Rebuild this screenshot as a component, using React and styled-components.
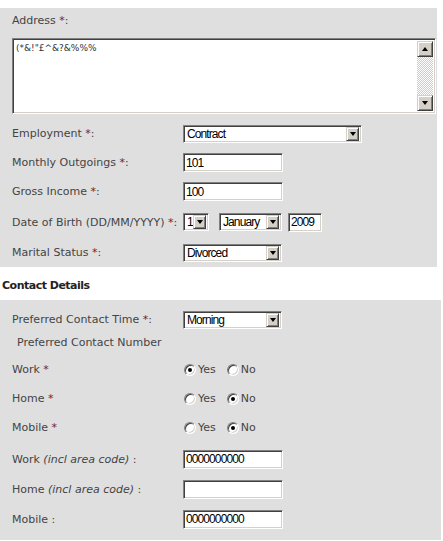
import React from 'react'
import styled, { createGlobalStyle, css } from 'styled-components'

const GlobalStyle = createGlobalStyle`
  html, body {
    margin: 0;
    padding: 0;
    background: #fff;
  }
  body {
    font-family: "DejaVu Sans", Verdana, sans-serif;
    font-size: 11px;
    color: #444;
  }
`

// classic sunken 3D edge used by inputs, selects and the textarea
const sunken = css`
  border: 1px solid;
  border-color: #808080 #fff #fff #808080;
  box-shadow: inset 1px 1px 0 #404040, inset -1px -1px 0 #d4d0c8;
`

const raised = css`
  border: 1px solid;
  border-color: #d4d0c8 #404040 #404040 #d4d0c8;
  box-shadow: inset 1px 1px 0 #fff, inset -1px -1px 0 #808080;
`

// narrow system-looking face for values inside the controls
const controlFont = css`
  font-family: "Liberation Sans", Arial, sans-serif;
  font-size: 12px;
  letter-spacing: -0.9px;
  color: #000;
`

const Page = styled.div`
  width: 443px;
  padding-top: 8px;
`

const Panel = styled.div`
  background: #dfdfdf;
  width: ${p => p.$width}px;
  padding: ${p => p.$pad};
  box-sizing: border-box;
`

const FieldTitle = styled.div`
  line-height: 13px;
  margin-bottom: 11px;
`

const Req = styled.span`
  color: #7a1c1c;
`

const TextBox = styled.div`
  width: 424px;
  height: 76px;
  box-sizing: border-box;
  display: flex;
  background: #fff;
  padding: 2px;
  ${sunken};
`

const Area = styled.textarea`
  flex: 1;
  border: none;
  outline: none;
  resize: none;
  margin: 0;
  padding: 2px 1px;
  background: #fff;
  font-family: "DejaVu Sans", Verdana, sans-serif;
  font-size: 9px;
  color: #333;
  overflow: hidden;
`

const ScrollBar = styled.div`
  width: 16px;
  display: flex;
  flex-direction: column;
  background-color: #fff;
  background-image: conic-gradient(#cfcbc4 25%, #fff 0 50%, #cfcbc4 0 75%, #fff 0);
  background-size: 2px 2px;
`

const ScrollButton = styled.div`
  width: 16px;
  height: 16px;
  box-sizing: border-box;
  background: #d4d0c8;
  display: flex;
  align-items: center;
  justify-content: center;
  ${raised};
  &::after {
    content: '';
    border-left: 3.5px solid transparent;
    border-right: 3.5px solid transparent;
    ${p => p.$down
      ? css`border-top: 4px solid #000;`
      : css`border-bottom: 4px solid #000;`}
  }
`

const Track = styled.div`
  flex: 1;
`

const Row = styled.div`
  display: flex;
  align-items: center;
  height: ${p => p.$h || 29}px;
  margin-top: ${p => p.$mt || 0}px;
`

const Label = styled.div`
  width: 171px;
  flex-shrink: 0;
  white-space: nowrap;
  padding-left: ${p => p.$indent || 0}px;
  em {
    font-style: italic;
  }
`

const Controls = styled.div`
  display: flex;
  align-items: center;
`

const SelectBox = styled.div`
  width: ${p => p.$w}px;
  height: 18px;
  box-sizing: border-box;
  display: flex;
  align-items: center;
  background: #fff;
  padding: 1px 2px 1px 1px;
  margin-right: ${p => p.$mr || 0}px;
  ${sunken};
  ${controlFont};
`

const SelectText = styled.span`
  flex: 1;
  padding-left: 2px;
  overflow: hidden;
  white-space: nowrap;
  line-height: 14px;
`

const DropButton = styled.span`
  width: 13px;
  height: 14px;
  flex-shrink: 0;
  box-sizing: border-box;
  background: #d4d0c8;
  display: flex;
  align-items: center;
  justify-content: center;
  ${raised};
  &::after {
    content: '';
    border-left: 3.5px solid transparent;
    border-right: 3.5px solid transparent;
    border-top: 4px solid #000;
  }
`

const TextInput = styled.input`
  width: ${p => p.$w || 100}px;
  height: 19px;
  box-sizing: border-box;
  margin: 0;
  padding: 0 2px;
  background: #fff;
  outline: none;
  ${sunken};
  ${controlFont};
`

const Choice = styled.label`
  display: flex;
  align-items: center;
  margin-right: 11px;
  margin-left: ${p => p.$ml || 0}px;
`

const RadioDot = styled.span`
  width: 12px;
  height: 12px;
  box-sizing: border-box;
  border-radius: 50%;
  background: #fff;
  position: relative;
  margin-right: 2px;
  ${sunken};
  ${p => p.$on && css`
    &::after {
      content: '';
      position: absolute;
      left: 3px;
      top: 3px;
      width: 4px;
      height: 4px;
      border-radius: 50%;
      background: #000;
    }
  `}
`

const SectionHead = styled.div`
  padding: 12px 0 8px 2px;
  line-height: 13px;
  font-weight: bold;
  letter-spacing: -0.5px;
  color: #222;
`

const Select = ({ w, value, mr }) => (
  <SelectBox $w={w} $mr={mr}>
    <SelectText>{value}</SelectText>
    <DropButton />
  </SelectBox>
)

const YesNo = ({ yes }) => (
  <Controls>
    <Choice $ml={1}>
      <RadioDot $on={yes} />
      Yes
    </Choice>
    <Choice>
      <RadioDot $on={!yes} />
      No
    </Choice>
  </Controls>
)

const App = () => {
  return (
    <Page>
      <GlobalStyle />
      <Panel $width={437} $pad="6px 0 0 12px">
        <FieldTitle>Address <Req>*</Req>:</FieldTitle>
        <TextBox>
          <Area defaultValue={'(*&!"£^&?&%%%'} />
          <ScrollBar>
            <ScrollButton />
            <Track />
            <ScrollButton $down />
          </ScrollBar>
        </TextBox>

        <Row $mt={5}>
          <Label>Employment <Req>*</Req>:</Label>
          <Select w={179} value="Contract" />
        </Row>
        <Row>
          <Label>Monthly Outgoings <Req>*</Req>:</Label>
          <TextInput defaultValue="101" />
        </Row>
        <Row>
          <Label>Gross Income <Req>*</Req>:</Label>
          <TextInput defaultValue="100" />
        </Row>
        <Row $h={32}>
          <Label>Date of Birth (DD/MM/YYYY) <Req>*</Req>:</Label>
          <Controls>
            <Select w={26} value="1" mr={10} />
            <Select w={63} value="January" mr={6} />
            <TextInput $w={34} defaultValue="2009" />
          </Controls>
        </Row>
        <Row>
          <Label>Marital Status <Req>*</Req>:</Label>
          <Select w={99} value="Divorced" />
        </Row>
      </Panel>

      <SectionHead>Contact Details</SectionHead>

      <Panel $width={441} $pad="5px 0 6px 12px">
        <Row>
          <Label>Preferred Contact Time <Req>*</Req>:</Label>
          <Select w={99} value="Morning" />
        </Row>
        <Row $h={16}>
          <Label $indent={5}>Preferred Contact Number</Label>
        </Row>
        <Row $mt={5}>
          <Label>Work <Req>*</Req></Label>
          <YesNo yes />
        </Row>
        <Row>
          <Label>Home <Req>*</Req></Label>
          <YesNo />
        </Row>
        <Row>
          <Label>Mobile <Req>*</Req></Label>
          <YesNo />
        </Row>
        <Row $h={30} $mt={2}>
          <Label>Work <em>(incl area code)</em> :</Label>
          <TextInput defaultValue="0000000000" />
        </Row>
        <Row $h={30}>
          <Label>Home <em>(incl area code)</em> :</Label>
          <TextInput defaultValue="" />
        </Row>
        <Row $h={30}>
          <Label>Mobile :</Label>
          <TextInput defaultValue="0000000000" />
        </Row>
      </Panel>
    </Page>
  )
}

export default App
